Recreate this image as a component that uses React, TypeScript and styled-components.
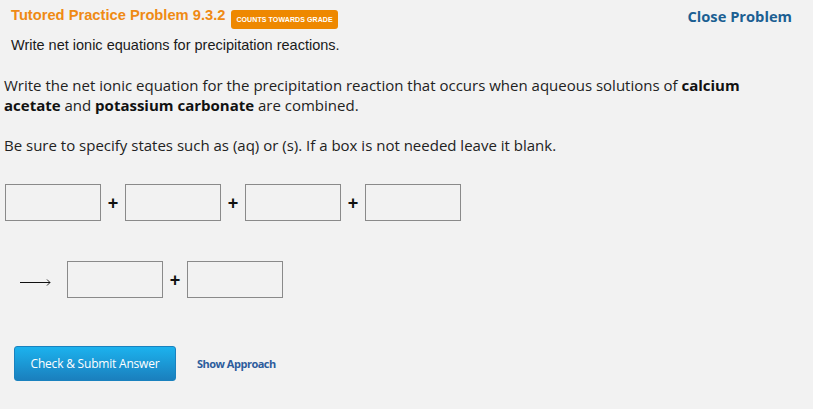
import React from "react";
import styled, { createGlobalStyle } from "styled-components";

const GlobalStyle = createGlobalStyle`
  html, body {
    margin: 0;
    padding: 0;
    background: #f2f2f2;
  }
  * { box-sizing: border-box; }
`;

const Page = styled.div`
  width: 813px;
  min-height: 409px;
  background: #f2f2f2;
`;

const Header = styled.header`
  display: flex;
  justify-content: space-between;
  align-items: flex-start;
  padding: 5px 21px 0 11px;
`;

const TitleBlock = styled.div`
  display: flex;
  flex-direction: column;
`;

const TitleRow = styled.div`
  display: flex;
  align-items: flex-start;
  gap: 6px;
`;

const Title = styled.h1`
  margin: 0;
  font-family: "Liberation Sans", Arial, sans-serif;
  font-weight: 700;
  font-size: 14.7px;
  line-height: 20px;
  color: #ef8a14;
`;

const Badge = styled.span`
  display: inline-flex;
  align-items: center;
  height: 19px;
  margin-top: 5px;
  padding: 0 5px;
  border-radius: 3px;
  background: #ee8800;
  color: #fff;
  font-family: "Liberation Sans", Arial, sans-serif;
  font-weight: 700;
  font-size: 7px;
  letter-spacing: 0.1px;
  text-transform: uppercase;
`;

const Subtitle = styled.p`
  margin: 6px 0 0;
  font-family: "Liberation Sans", Arial, sans-serif;
  font-size: 14.5px;
  line-height: 20px;
  color: #1a1a1a;
`;

const CloseLink = styled.a`
  margin-top: 1px;
  font-family: "Open Sans", sans-serif;
  font-weight: 700;
  font-size: 14.7px;
  line-height: 20px;
  color: #1b5f92;
  text-decoration: none;
  cursor: pointer;
`;

const Prompt = styled.section`
  padding: 0 4px;
  margin-top: 20px;
  font-family: "Open Sans", sans-serif;
  font-size: 15px;
  line-height: 20px;
  color: #222;
`;

const Paragraph = styled.p`
  margin: 0 0 20px;
  width: 770px;
  &:last-child { margin-bottom: 0; }
  b { font-weight: 700; color: #111; }
`;

const Equation = styled.div`
  display: flex;
  flex-direction: column;
  gap: 40px;
  margin-top: 29px;
  padding-left: 5px;
`;

const EqRow = styled.div<{ $indent?: number }>`
  display: flex;
  align-items: center;
  padding-left: ${(p) => p.$indent ?? 0}px;
`;

const Slot = styled.input`
  width: 96px;
  height: 37px;
  margin: 0;
  border: 1px solid #8a8a8a;
  background: transparent;
  font-family: "Open Sans", sans-serif;
  font-size: 14px;
  outline: none;
`;

const Plus = styled.span`
  width: 24px;
  text-align: center;
  font-family: "Liberation Sans", Arial, sans-serif;
  font-weight: 700;
  font-size: 18px;
  color: #111;
  margin-top: 2px;
`;

const Arrow = styled.svg`
  display: block;
  width: 31px;
  height: 9px;
  margin: 6px 16px 0 0;
`;

const Actions = styled.div`
  display: flex;
  align-items: center;
  gap: 21px;
  margin-top: 48px;
  padding-left: 14px;
`;

const SubmitButton = styled.button`
  width: 162px;
  height: 35px;
  padding: 0;
  border: 1px solid #1a82bf;
  border-radius: 3px;
  background: linear-gradient(#1cb2ee, #1a7fbd);
  color: #fff;
  font-family: "Open Sans", sans-serif;
  font-size: 12px;
  letter-spacing: -0.2px;
  cursor: pointer;
`;

const ApproachLink = styled.a`
  font-family: "Open Sans", sans-serif;
  font-weight: 700;
  font-size: 11px;
  letter-spacing: -0.5px;
  color: #2c5c9c;
  text-decoration: none;
  cursor: pointer;
`;

const LongArrow = () => (
  <Arrow viewBox="0 0 31 9" aria-hidden="true">
    <line x1="0" y1="4.5" x2="30" y2="4.5" stroke="#111" strokeWidth="1" />
    <polyline points="27,1.5 30,4.5 27,7.5" fill="none" stroke="#111" strokeWidth="0.9" />
  </Arrow>
);

export default function App() {
  return (
    <Page>
      <GlobalStyle />
      <Header>
        <TitleBlock>
          <TitleRow>
            <Title>Tutored Practice Problem 9.3.2</Title>
            <Badge>Counts towards grade</Badge>
          </TitleRow>
          <Subtitle>Write net ionic equations for precipitation reactions.</Subtitle>
        </TitleBlock>
        <CloseLink>Close Problem</CloseLink>
      </Header>

      <Prompt>
        <Paragraph>
          Write the net ionic equation for the precipitation reaction that occurs when aqueous
          solutions of <b>calcium acetate</b> and <b>potassium carbonate</b> are combined.
        </Paragraph>
        <Paragraph>
          Be sure to specify states such as (aq) or (s). If a box is not needed leave it blank.
        </Paragraph>
      </Prompt>

      <Equation>
        <EqRow>
          <Slot />
          <Plus>+</Plus>
          <Slot />
          <Plus>+</Plus>
          <Slot />
          <Plus>+</Plus>
          <Slot />
        </EqRow>
        <EqRow $indent={15}>
          <LongArrow />
          <Slot />
          <Plus>+</Plus>
          <Slot />
        </EqRow>
      </Equation>

      <Actions>
        <SubmitButton>Check &amp; Submit Answer</SubmitButton>
        <ApproachLink>Show Approach</ApproachLink>
      </Actions>
    </Page>
  );
}
